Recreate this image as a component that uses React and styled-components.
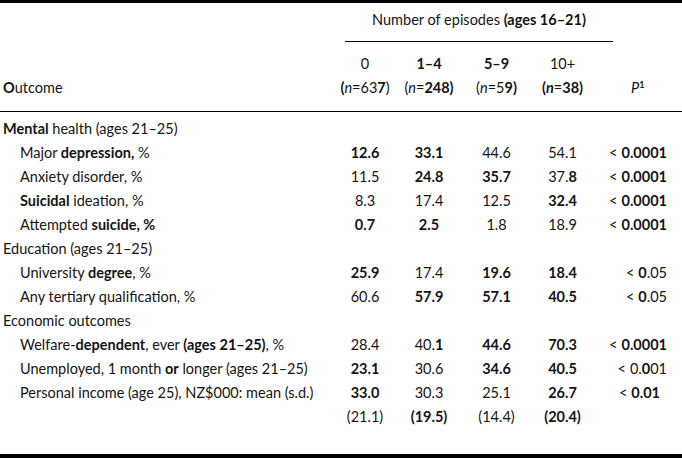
import React from "react";
import styled, { createGlobalStyle } from "styled-components";

const Global = createGlobalStyle`
  html, body { margin: 0; padding: 0; background: #fff; }
  body { font-family: Lato, "Open Sans", sans-serif; color: #141414; }
`;

const Table = styled.table`
  width: 682px;
  border-collapse: separate;
  border-spacing: 0;
  border-top: 3px solid #000;
  border-bottom: 4px solid #000;
  font-size: 14.5px;
  table-layout: fixed;
`;

const Col = styled.col`
  width: ${(p) => p.$w}px;
`;

const Cell = styled.td`
  padding: 0;
  height: 24px;
  line-height: 24px;
  text-align: ${(p) => p.$align || "center"};
  padding-left: ${(p) => p.$indent || 0}px;
  padding-right: ${(p) => p.$pr || 0}px;
  white-space: nowrap;
  vertical-align: middle;
`;

const SpanHead = styled.td`
  padding: 0;
`;

const Rule = styled.div`
  margin: 0 -18px 0 10px;
  padding: 5px 0 9px;
  line-height: 24px;
  border-bottom: 1px solid #000;
  text-align: center;
`;

const LevelRow = styled.tr`
  td { padding-top: 10px; }
`;

const NRow = styled.tr`
  td {
    padding-bottom: 11px;
    border-bottom: 1.5px solid #000;
  }
`;

const FirstRow = styled.tr`
  td { padding-top: 5px; }
`;

const LastRow = styled.tr`
  td { padding-bottom: 25px; }
`;

const B = styled.b`
  font-weight: 700;
`;

const I = styled.i`
  font-style: italic;
`;

const Sup = styled.sup`
  font-size: 9px;
  font-weight: 700;
  vertical-align: 5px;
  line-height: 0;
`;

const Lt = styled.span`
  font-weight: 400;
  line-height: 0;
  margin-right: 4px;
`;

const Data = ({ label, vals, p, indent = 20, as: Row = "tr", pr = 15 }) => (
  <Row>
    <Cell $align="left" $indent={indent}>{label}</Cell>
    {vals.map((v, i) => (
      <Cell key={i}>{v}</Cell>
    ))}
    <Cell $align="right" $pr={pr}>{p}</Cell>
  </Row>
);

const Section = ({ children, as: Row = "tr" }) => (
  <Row>
    <Cell $align="left" $indent={3} colSpan={6}>{children}</Cell>
  </Row>
);

const lt = (s) => (
  <>
    <Lt>{"<"}</Lt>
    {s}
  </>
);

export default function App() {
  return (
    <>
      <Global />
      <Table>
        <colgroup>
          <Col $w={335} />
          <Col $w={60} />
          <Col $w={68} />
          <Col $w={67} />
          <Col $w={65} />
          <Col $w={87} />
        </colgroup>
        <thead>
          <tr>
            <SpanHead />
            <SpanHead colSpan={4}>
              <Rule>
                Number of episodes <B>(ages 16–21)</B>
              </Rule>
            </SpanHead>
            <SpanHead />
          </tr>
          <LevelRow>
            <Cell />
            <Cell>0</Cell>
            <Cell><B>1–4</B></Cell>
            <Cell><B>5–9</B></Cell>
            <Cell>10+</Cell>
            <Cell />
          </LevelRow>
          <NRow>
            <Cell $align="left" $indent={3}><B>O</B>utcome</Cell>
            <Cell><B>(</B><I>n</I>=63<B>7</B>)</Cell>
            <Cell>(<I>n</I>=<B>248)</B></Cell>
            <Cell>(<I>n</I>=5<B>9)</B></Cell>
            <Cell><B>(<I>n</I></B>=<B>38)</B></Cell>
            <Cell $align="left" $indent={36}><I>P</I><Sup>1</Sup></Cell>
          </NRow>
        </thead>
        <tbody>
          <Section as={FirstRow}><B>Mental</B> health (ages 21–25)</Section>
          <Data label={<>Major <B>depression,</B> %</>} vals={[<B>12.6</B>, <B>33.1</B>, "44.6", "54.1"]} p={lt(<B>0.0001</B>)} />
          <Data label="Anxiety disorder, %" vals={["11.5", <B>24.8</B>, <B>35.7</B>, <>37.<B>8</B></>]} p={lt(<B>0.0001</B>)} />
          <Data label={<><B>Suicidal</B> ideation, %</>} vals={["8.3", "17.4", "12.5", <B>32.4</B>]} p={lt(<B>0.0001</B>)} />
          <Data label={<>Attempted <B>suicide, %</B></>} vals={[<B>0.7</B>, <B>2.5</B>, "1.8", "18.9"]} p={lt(<B>0.0001</B>)} />
          <Section>Education (ages 21–25)</Section>
          <Data label={<>University <B>degree</B>, %</>} vals={[<B>25.9</B>, "17.4", <B>19.6</B>, <B>18.4</B>]} p={lt(<><B>0</B>.05</>)} />
          <Data label="Any tertiary qualification, %" vals={["60.6", <B>57.9</B>, <B>57.1</B>, <B>40.5</B>]} p={lt(<><B>0</B>.05</>)} />
          <Section>Economic outcomes</Section>
          <Data label={<>Welfare-<B>dependent</B>, ever <B>(ages 21–25)</B>, %</>} vals={["28.4", <>40.<B>1</B></>, <B>44.6</B>, <B>70.3</B>]} p={lt(<B>0.0001</B>)} />
          <Data label={<>Unemployed, 1 month <B>or</B> longer (ages 21–25)</>} vals={[<B>23.1</B>, "30.6", <B>34.6</B>, <B>40.5</B>]} p={lt(<>0.<B>0</B>01</>)} />
          <Data label="Personal income (age 25), NZ$000: mean (s.d.)" vals={[<B>33.0</B>, "30.3", "25.1", <B>26.7</B>]} p={<B>{lt("0.01")}</B>} pr={22} />
          <Data as={LastRow} label="" vals={["(21.1)", <B>(19.5)</B>, "(14.4)", <B>(20.4)</B>]} p="" />
        </tbody>
      </Table>
    </>
  );
}
